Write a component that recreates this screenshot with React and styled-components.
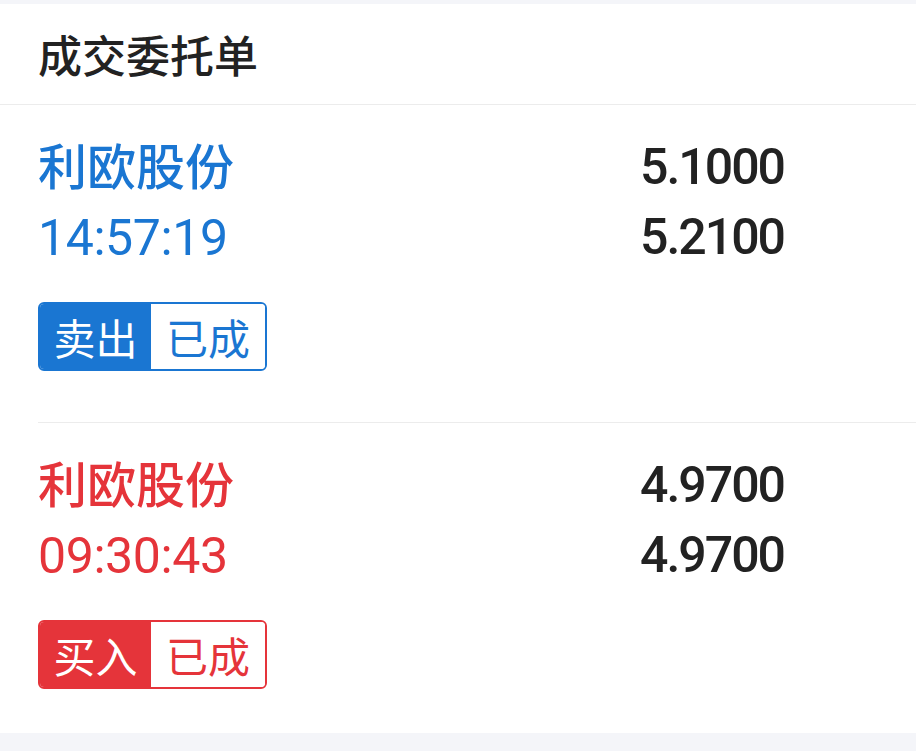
import React from 'react';
import styled, { createGlobalStyle } from 'styled-components';

const GlobalStyle = createGlobalStyle`
  html, body {
    margin: 0;
    padding: 0;
    background: #f4f5f9;
  }
  body {
    font-family: Roboto, "Noto Sans CJK SC", sans-serif;
  }
`;

const Page = styled.div`
  padding-top: 4px;
  min-height: 751px;
  box-sizing: border-box;
  background: #f4f5f9;
`;

const Panel = styled.div`
  background: #ffffff;
`;

const Header = styled.div`
  height: 100px;
  display: flex;
  align-items: center;
  padding: 0 38px;
  border-bottom: 1px solid #ececec;
  font: 500 44px "Noto Sans CJK SC", sans-serif;
  color: #222222;
`;

const List = styled.div`
  padding-left: 38px;
`;

const Item = styled.div`
  display: flex;
  padding: 27px 0 51px;
  border-bottom: 1px solid #ececec;

  &:last-child {
    border-bottom: none;
    padding-bottom: 44px;
  }
`;

const Left = styled.div`
  flex: 1;
  display: flex;
  flex-direction: column;
  align-items: flex-start;
  color: ${(p) => p.$color};
`;

const Name = styled.div`
  height: 70px;
  font: 500 49px/64px "Noto Sans CJK SC", sans-serif;
`;

const Time = styled.div`
  height: 70px;
  font: 400 50px/72px Roboto, sans-serif;
  letter-spacing: -0.4px;
`;

const Tag = styled.div`
  margin-top: 30px;
  display: flex;
  height: 69px;
  box-sizing: border-box;
  border: 2px solid ${(p) => p.$color};
  border-radius: 6px;
  overflow: hidden;
  font: 400 42px "Noto Sans CJK SC", sans-serif;
`;

const TagPart = styled.div`
  display: flex;
  align-items: center;
  justify-content: center;
  width: ${(p) => (p.$filled ? '111px' : '114px')};
  background: ${(p) => (p.$filled ? p.$color : '#ffffff')};
  color: ${(p) => (p.$filled ? '#ffffff' : p.$color)};
`;

const Right = styled.div`
  width: 276px;
  display: flex;
  flex-direction: column;
  color: #222222;
`;

const Price = styled.div`
  height: 70px;
  font: 500 50px/70px Roboto, sans-serif;
  letter-spacing: -2px;
`;

const Footer = styled.div`
  height: 18px;
`;

const BLUE = '#1a76d2';
const RED = '#e5343a';

const orders = [
  { name: '利欧股份', time: '14:57:19', side: '卖出', status: '已成', price: '5.1000', deal: '5.2100', color: BLUE },
  { name: '利欧股份', time: '09:30:43', side: '买入', status: '已成', price: '4.9700', deal: '4.9700', color: RED },
];

export default function App() {
  return (
    <>
      <GlobalStyle />
      <Page>
        <Panel>
          <Header>成交委托单</Header>
          <List>
            {orders.map((o, i) => (
              <Item key={i}>
                <Left $color={o.color}>
                  <Name>{o.name}</Name>
                  <Time>{o.time}</Time>
                  <Tag $color={o.color}>
                    <TagPart $filled $color={o.color}>{o.side}</TagPart>
                    <TagPart $color={o.color}>{o.status}</TagPart>
                  </Tag>
                </Left>
                <Right>
                  <Price>{o.price}</Price>
                  <Price>{o.deal}</Price>
                </Right>
              </Item>
            ))}
          </List>
        </Panel>
        <Footer />
      </Page>
    </>
  );
}
